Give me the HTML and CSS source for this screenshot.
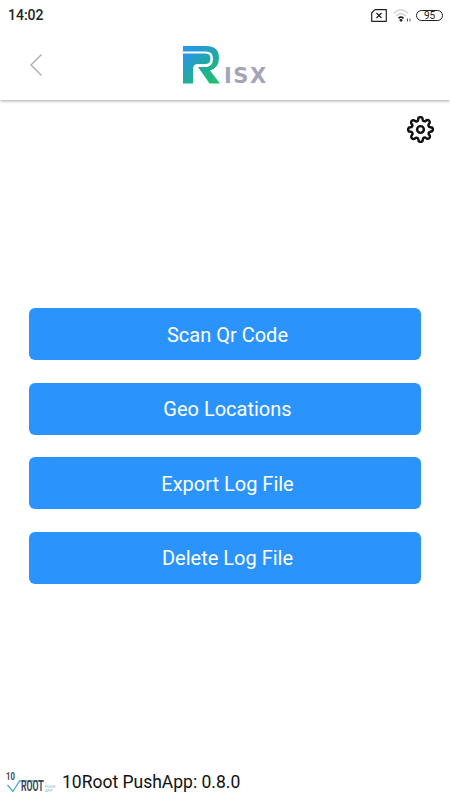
FILE: index.html
```html
<!DOCTYPE html>
<html>
	<head>
		<meta charset="utf-8" />
		<title>Risx</title>
		<link rel="stylesheet" href="styles.css">
	</head>
	<body>
		<div class="page">
			<div class="top">
				<div class="status">
					<span class="time">14:02</span>
					<div class="status-icons">
						<svg class="sim" width="16" height="13" viewBox="0 0 16 13">
							<path d="M4 .7H15.3V12.3H.7V4Z" fill="none" stroke="#222" stroke-width="1.2" stroke-linejoin="round"/>
							<path d="M5.5 4L10.5 9M10.5 4L5.5 9" stroke="#222" stroke-width="1.3"/>
						</svg>
						<svg class="wifi" width="18" height="14" viewBox="0 0 18 14">
							<path d="M.7 5.5Q8 -2 15.3 5.5" fill="none" stroke="#d8d8d8" stroke-width="1.4"/>
							<path d="M3.2 8Q8 3 12.8 8" fill="none" stroke="#cfcfcf" stroke-width="1.4"/>
							<path d="M5.5 10.3Q8 8 10.5 10.3" fill="none" stroke="#222" stroke-width="1.6"/>
							<circle cx="8" cy="12.3" r="1.4" fill="#222"/>
							<path d="M14.5 10.5V13.5M17 10.5V13.5" stroke="#555" stroke-width="1"/>
						</svg>
						<span class="battery">95</span>
					</div>
				</div>
				<div class="header">
					<svg class="back" width="14" height="24" viewBox="0 0 14 24">
						<path d="M12.5 1.5L2 12L12.5 22.5" fill="none" stroke="#a9a9a9" stroke-width="1.3"/>
					</svg>
					<div class="logo">
						<svg width="38" height="38" viewBox="0 0 38 38">
							<defs>
								<linearGradient id="rg" x1="0" y1="0" x2="0.8" y2="1">
									<stop offset="0" stop-color="#2a94f4"/>
									<stop offset="0.55" stop-color="#1fa8a8"/>
									<stop offset="1" stop-color="#20c070"/>
								</linearGradient>
							</defs>
							<path fill="url(#rg)" d="M0 0H23Q36 0 36 12Q36 22 27 24.5L37 37.5H26.5L15 21H24Q30 20 30 12.5Q30 5.5 23 5.5H0Z"/>
							<path fill="url(#rg)" d="M0 7.5H22Q27.5 7.5 27.5 12.5Q27.5 18 22 18H15Q10 18 10 23V37.5H0Z"/>
						</svg>
						<span class="logo-text">ISX</span>
					</div>
				</div>
			</div>
			<div class="content">
				<div class="tools">
					<svg class="settings" width="27" height="27" viewBox="0 0 24 24" fill="none" stroke="#111" stroke-width="2.2" stroke-linecap="round" stroke-linejoin="round">
						<circle cx="12" cy="12" r="3"/>
						<path d="M19.4 15a1.65 1.65 0 0 0 .33 1.82l.06.06a2 2 0 1 1-2.83 2.83l-.06-.06a1.65 1.65 0 0 0-2.82 1.17V21a2 2 0 1 1-4 0v-.09a1.65 1.65 0 0 0-2.82-1.17l-.06.06a2 2 0 1 1-2.83-2.83l.06-.06a1.65 1.65 0 0 0-1.17-2.82H3a2 2 0 1 1 0-4h.09a1.65 1.65 0 0 0 1.17-2.82l-.06-.06a2 2 0 1 1 2.83-2.83l.06.06a1.65 1.65 0 0 0 2.82-1.17V3a2 2 0 1 1 4 0v.09a1.65 1.65 0 0 0 2.82 1.17l.06-.06a2 2 0 1 1 2.83 2.83l-.06.06a1.65 1.65 0 0 0 1.17 2.82H21a2 2 0 1 1 0 4h-.09a1.65 1.65 0 0 0-1.51 1z"/>
					</svg>
				</div>
				<div class="buttons">
					<a class="btn">Scan Qr Code</a>
					<a class="btn">Geo Locations</a>
					<a class="btn">Export Log File</a>
					<a class="btn">Delete Log File</a>
				</div>
			</div>
			<div class="footer">
				<div class="brand">
					<span class="brand-ten">10</span>
					<svg class="brand-v" width="42" height="13" viewBox="0 0 42 13">
						<path d="M3.5 5L9 11.5L15.5 1H40" fill="none" stroke="#4aa8c8" stroke-width="1.3"/>
					</svg>
					<span class="brand-root">ROOT</span>
					<span class="brand-small">PUSH<br>APP</span>
				</div>
				<span class="version">10Root PushApp: 0.8.0</span>
			</div>
		</div>
	</body>
</html>
```

FILE: styles.css
```css
*{
	margin: 0;
	padding: 0;
	box-sizing: border-box;
	font-family: Roboto, "Liberation Sans", sans-serif;
}
a{
	text-decoration: none;
	color: inherit;
}
body{
	background-color: white;
}
.page{
	width: 450px;
	height: 800px;
	display: flex;
	flex-direction: column;
	overflow: hidden;
}
/*top*/
.top{
	height: 100px;
	box-shadow: 0 1px 3px 0 rgba(0, 0, 0, .35);
}
.status{
	height: 30px;
	padding: 0 7px 0 8px;
	display: flex;
	align-items: center;
	justify-content: space-between;
}
.time{
	font-size: 14px;
	font-weight: 500;
	color: #222;
}
.status-icons{
	display: flex;
	align-items: center;
}
.wifi{
	margin-left: 6px;
}
.battery{
	margin-left: 5px;
	width: 27px;
	height: 11px;
	border: 1px solid #222;
	border-radius: 6px;
	font-size: 10px;
	line-height: 10px;
	text-align: center;
	color: #222;
}
.header{
	height: 70px;
	display: flex;
	align-items: center;
	padding-left: 29px;
}
.back{
	margin-top: -1px;
}
.logo{
	margin-left: 140px;
	display: flex;
	align-items: flex-end;
}
.logo-text{
	margin: 0 0 -1px 3px;
	font-family: "DejaVu Sans", sans-serif;
	font-size: 21px;
	line-height: 18px;
	font-weight: 700;
	letter-spacing: 1.5px;
	color: #a4a4b6;
}
/*content*/
.content{
	flex: 1;
}
.tools{
	height: 208px;
	padding: 16px 16px 0 0;
	display: flex;
	justify-content: flex-end;
	align-items: flex-start;
}
.buttons{
	padding: 0 29px;
	display: flex;
	flex-direction: column;
	gap: 22.5px;
}
.btn{
	display: block;
	height: 52px;
	padding: .5px 0 0 5px;
	line-height: 52px;
	text-align: center;
	font-size: 20px;
	color: white;
	background-color: #2a94fc;
	border-radius: 6px;
}
/*footer*/
.footer{
	height: 36px;
	padding: 0 0 1px 4px;
	display: flex;
	align-items: center;
}
.brand{
	width: 53px;
	height: 21px;
	position: relative;
	color: #3b4a5c;
}
.brand-ten{
	position: absolute;
	left: 2px;
	top: 2px;
	font-size: 11px;
	line-height: 8px;
	font-weight: 700;
	transform: scaleX(.7);
	transform-origin: left;
}
.brand-v{
	position: absolute;
	left: 0;
	top: 9px;
}
.brand-root{
	position: absolute;
	left: 17px;
	top: 10px;
	font-size: 15px;
	line-height: 11px;
	font-weight: 700;
	transform: scaleX(.58);
	transform-origin: left;
}
.brand-small{
	position: absolute;
	left: 41px;
	top: 14px;
	font-size: 4px;
	line-height: 4px;
	color: #7fb4d8;
}
.version{
	margin-left: 5px;
	font-size: 17.5px;
	color: #111;
}
```
